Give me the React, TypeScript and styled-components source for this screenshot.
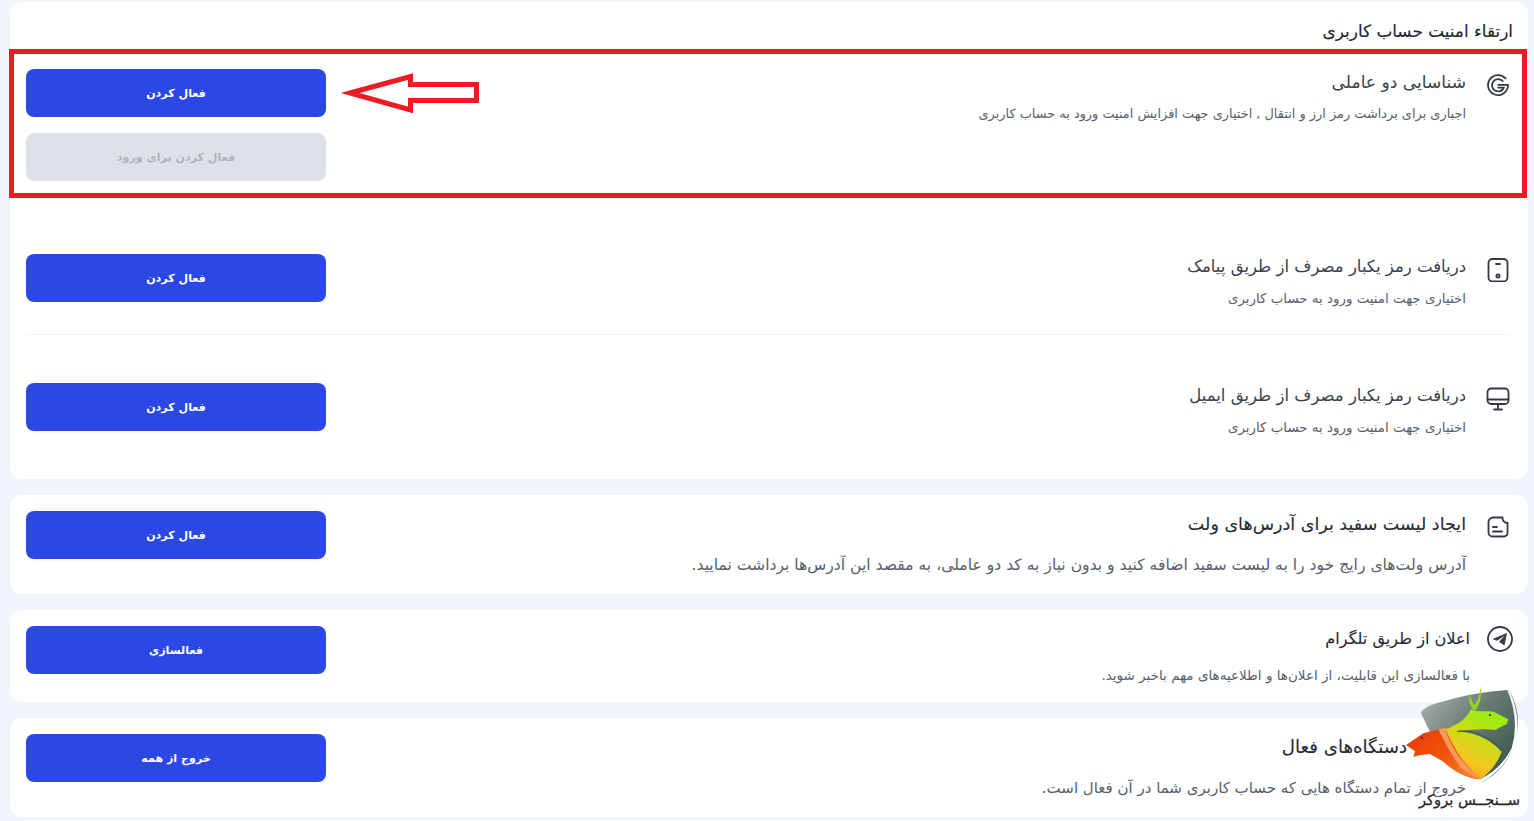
import React, { FC, ReactNode } from 'react';
import styled, { createGlobalStyle } from 'styled-components';

const GlobalStyle = createGlobalStyle`
  html, body {
    margin: 0;
    padding: 0;
    height: 821px;
    overflow: hidden;
    background: #f2f4fb;
    font-family: "DejaVu Sans", "Noto Sans", "Liberation Sans", sans-serif;
  }
`;

const Page = styled.div`
  direction: rtl;
  position: relative;
  box-sizing: border-box;
  width: 1534px;
  height: 821px;
  padding: 2px 6px 0 6px;
  display: flex;
  flex-direction: column;
  gap: 16px;
  overflow: hidden;
`;

const Card = styled.section<{ $pad: number }>`
  box-sizing: border-box;
  flex: none;
  width: 1518px;
  padding: 16px 18px ${(p) => p.$pad}px 16px;
  background: #fff;
  border-radius: 12px;
`;

const Heading = styled.h2`
  margin: 0 -3px 0 0;
  height: 26px;
  line-height: 26px;
  font-size: 16.85px;
  font-weight: 400;
  -webkit-text-stroke: 0.15px #1f2330;
  color: #1f2330;
`;

const Row = styled.div<{ $top: number; $bottom: number; $line?: boolean }>`
  display: flex;
  align-items: flex-start;
  justify-content: space-between;
  padding: ${(p) => p.$top}px 0 ${(p) => p.$bottom}px;
  border-bottom: ${(p) => (p.$line ? '1px solid #f1f2f5' : '0')};
`;

const Info = styled.div<{ $gap?: number; $shift?: number }>`
  display: flex;
  align-items: flex-start;
  gap: ${(p) => p.$gap ?? 20}px;
  height: 48px;
  margin-right: ${(p) => p.$shift ?? 0}px;
`;

const IconBox = styled.div<{ $top?: number }>`
  min-width: 24px;
  height: 24px;
  margin-top: ${(p) => p.$top ?? 4}px;
  flex: none;
  color: #343945;
`;

const TextCol = styled.div<{ $gap: number }>`
  display: flex;
  flex-direction: column;
  gap: ${(p) => p.$gap}px;
`;

const Title = styled.div<{ $size?: number; $inset?: number; $strong?: boolean }>`
  height: 26px;
  line-height: 26px;
  font-size: ${(p) => p.$size ?? 16.5}px;
  font-weight: 400;
  padding-right: ${(p) => p.$inset ?? 0}px;
  color: ${(p) => (p.$strong ? '#262a35' : '#3b404c')};
  -webkit-text-stroke: ${(p) => (p.$strong ? '0.12px #262a35' : '0')};
`;

const Desc = styled.div<{ $size?: number }>`
  height: 20px;
  line-height: 20px;
  white-space: nowrap;
  font-size: ${(p) => p.$size ?? 13.4}px;
  color: #585e6b;
`;

const Actions = styled.div`
  display: flex;
  flex-direction: column;
  gap: 16px;
`;

const Button = styled.button<{ $off?: boolean }>`
  width: 300px;
  height: 48px;
  border: 0;
  padding: 0;
  border-radius: 8px;
  background: ${(p) => (p.$off ? '#dde1e8' : '#2b47e4')};
  color: ${(p) => (p.$off ? '#aeb3bd' : '#fff')};
  font-family: inherit;
  font-size: 11.1px;
  font-weight: 600;
`;

const Frame = styled.div`
  position: absolute;
  left: 9px;
  top: 49px;
  width: 1518px;
  height: 149px;
  box-sizing: border-box;
  border: 5px solid #ec1c24;
`;

const ArrowMark = styled.svg`
  position: absolute;
  left: 338px;
  top: 72px;
  width: 142px;
  height: 42px;
`;

const LogoMark = styled.svg`
  position: absolute;
  left: 1380px;
  top: 680px;
  width: 154px;
  height: 141px;
`;

const Svg: FC<{ children: ReactNode }> = ({ children }) => (
  <svg width="24" height="24" viewBox="0 0 24 24" fill="none" stroke="currentColor" strokeWidth="1.8" strokeLinecap="round" strokeLinejoin="round">
    {children}
  </svg>
);

const GoogleIcon = () => (
  <Svg>
    <path d="M19.500 5.400A10 10 0 1 0 22 12.800V11.800H12.200" />
    <path d="M16.700 8A6.200 6.200 0 1 0 17.900 14.600H12.200" />
  </Svg>
);

const PhoneIcon = () => (
  <Svg>
    <rect x="2.500" y="1" width="19" height="22.500" rx="4" />
    <path d="M10 6h4" />
    <circle cx="12" cy="18" r="1.600" />
  </Svg>
);

const DesktopIcon = () => (
  <Svg>
    <rect x="1.500" y="1.500" width="21" height="15.500" rx="3.500" />
    <path d="M1.500 12.500h21M12 17v5M8 22.500h8" />
  </Svg>
);

const NoteIcon = () => (
  <Svg>
    <path d="M15.500 2.500H7a4.500 4.500 0 0 0-4.500 4.500v10.500a4 4 0 0 0 4 4h11.500a3.500 3.500 0 0 0 3.500-3.500V8" />
    <path d="M16.500 2.500a5 5 0 0 0 5 5.500" />
    <path d="M7 12h4M7 16.500h9" />
  </Svg>
);

const TelegramIcon = () => (
  <svg width="26" height="26" viewBox="0 0 26 26" fill="none">
    <circle cx="13" cy="13" r="12" stroke="currentColor" strokeWidth="1.800" />
    <path d="M20 7L5.500 13L10 14.800L18 9.500L12 15.800L17.500 19.500Z" fill="currentColor" />
  </svg>
);

const Logo = () => (
  <LogoMark viewBox="0 0 462 423">
    <defs>
      <linearGradient id="shield" x1="0" y1="0" x2="1" y2="0.8">
        <stop offset="0" stopColor="#b4b8b6" />
        <stop offset="0.45" stopColor="#6f8079" />
        <stop offset="1" stopColor="#3a574c" />
      </linearGradient>
      <linearGradient id="green" x1="0.9" y1="0" x2="0.3" y2="1">
        <stop offset="0" stopColor="#8cf011" />
        <stop offset="0.4" stopColor="#c8dd18" />
        <stop offset="0.7" stopColor="#f2c820" />
        <stop offset="1" stopColor="#f7941c" />
      </linearGradient>
      <linearGradient id="fire" x1="0" y1="0" x2="1" y2="0.7">
        <stop offset="0" stopColor="#e63604" />
        <stop offset="0.6" stopColor="#f0560f" />
        <stop offset="1" stopColor="#f67f2a" />
      </linearGradient>
    </defs>
    <path d="M122 98Q135 80 170 70Q270 38 382 30Q420 120 395 205Q365 265 300 298Q230 240 150 155Z" fill="url(#shield)" />
    <path d="M385 28C425 100 440 230 300 310C380 270 412 200 414 130C414 90 402 55 385 28Z" fill="#3f4f49" />
    <path d="M205 145C240 130 262 112 272 88C295 100 330 88 350 100L385 118L380 132L345 150C320 146 270 148 232 155C290 155 340 185 365 215C350 255 322 285 300 298C240 292 190 240 150 155Z" fill="url(#green)" />
    <path d="M302 18C306 50 300 72 285 94C270 82 265 62 268 45C275 60 279 70 283 76C295 60 300 40 302 18Z" fill="#8fd624" />
    <path d="M78 195L130 160L195 143C215 190 245 250 305 298C255 298 215 268 190 245L150 222L118 226L100 230L105 214Z" fill="url(#fire)" />
    <path d="M195 143C205 180 225 215 245 240C265 265 285 285 305 298C290 295 265 280 240 260C215 225 190 180 175 148Z" fill="#f89a5c" />
    <path d="M232 154C280 150 330 170 365 212" stroke="#3d5a4c" strokeWidth="4" fill="none" />
    <circle cx="125" cy="173" r="3" fill="#222" />
    <circle cx="330" cy="105" r="3" fill="#222" />
    <text x="420" y="374" direction="rtl" textAnchor="start" fontSize="44" stroke="#1f2226" strokeWidth="0.800" fill="#1f2226" fontFamily="'DejaVu Sans', sans-serif">
      ســنجــس بروکر
    </text>
  </LogoMark>
);

export default function App() {
  return (
    <>
      <GlobalStyle />
      <Page>
        <Card $pad={0}>
          <Heading>ارتقاء امنیت حساب کاربری</Heading>
          <Row $top={25} $bottom={25}>
            <Info>
              <IconBox><GoogleIcon /></IconBox>
              <TextCol $gap={9}>
                <Title $size={17.1}>شناسایی دو عاملی</Title>
                <Desc $size={12.9}>اجباری برای برداشت رمز ارز و انتقال , اختیاری جهت افزایش امنیت ورود به حساب کاربری</Desc>
              </TextCol>
            </Info>
            <Actions>
              <Button>فعال کردن</Button>
              <Button $off>فعال کردن برای ورود</Button>
            </Actions>
          </Row>
          <Row $top={48} $bottom={32} $line>
            <Info>
              <IconBox><PhoneIcon /></IconBox>
              <TextCol $gap={9}>
                <Title>دریافت رمز یکبار مصرف از طریق پیامک</Title>
                <Desc>اختیاری جهت امنیت ورود به حساب کاربری</Desc>
              </TextCol>
            </Info>
            <Button>فعال کردن</Button>
          </Row>
          <Row $top={48} $bottom={48}>
            <Info>
              <IconBox><DesktopIcon /></IconBox>
              <TextCol $gap={9}>
                <Title>دریافت رمز یکبار مصرف از طریق ایمیل</Title>
                <Desc>اختیاری جهت امنیت ورود به حساب کاربری</Desc>
              </TextCol>
            </Info>
            <Button>فعال کردن</Button>
          </Row>
        </Card>
        <Card $pad={35}>
          <Row $top={0} $bottom={0}>
            <Info>
              <IconBox><NoteIcon /></IconBox>
              <TextCol $gap={18}>
                <Title $size={17.5} $strong>ایجاد لیست سفید برای آدرس‌های ولت</Title>
                <Desc $size={15.6}>آدرس ولت‌های رایج خود را به لیست سفید اضافه کنید و بدون نیاز به کد دو عاملی، به مقصد این آدرس‌ها برداشت نمایید.</Desc>
              </TextCol>
            </Info>
            <Button>فعال کردن</Button>
          </Row>
        </Card>
        <Card $pad={28}>
          <Row $top={0} $bottom={0}>
            <Info $gap={17} $shift={-3}>
              <IconBox $top={0}><TelegramIcon /></IconBox>
              <TextCol $gap={13}>
                <Title $size={16.1} $strong>اعلان از طریق تلگرام</Title>
                <Desc $size={13.5}>با فعالسازی این قابلیت، از اعلان‌ها و اطلاعیه‌های مهم باخبر شوید.</Desc>
              </TextCol>
            </Info>
            <Button>فعالسازی</Button>
          </Row>
        </Card>
        <Card $pad={35}>
          <Row $top={0} $bottom={0}>
            <Info>
              <IconBox />
              <TextCol $gap={18}>
                <Title $size={18.2} $inset={59} $strong>دستگاه‌های فعال</Title>
                <Desc $size={15}>خروج از تمام دستگاه هایی که حساب کاربری شما در آن فعال است.</Desc>
              </TextCol>
            </Info>
            <Button>خروج از همه</Button>
          </Row>
        </Card>
        <Frame />
        <ArrowMark viewBox="0 0 142 42">
          <path d="M12 21L72.500 4.500V12.500H138.500V28.500H72.500V38Z" fill="#fff" stroke="#ec1c24" strokeWidth="5" strokeMiterlimit="10" />
        </ArrowMark>
        <Logo />
      </Page>
    </>
  );
}
